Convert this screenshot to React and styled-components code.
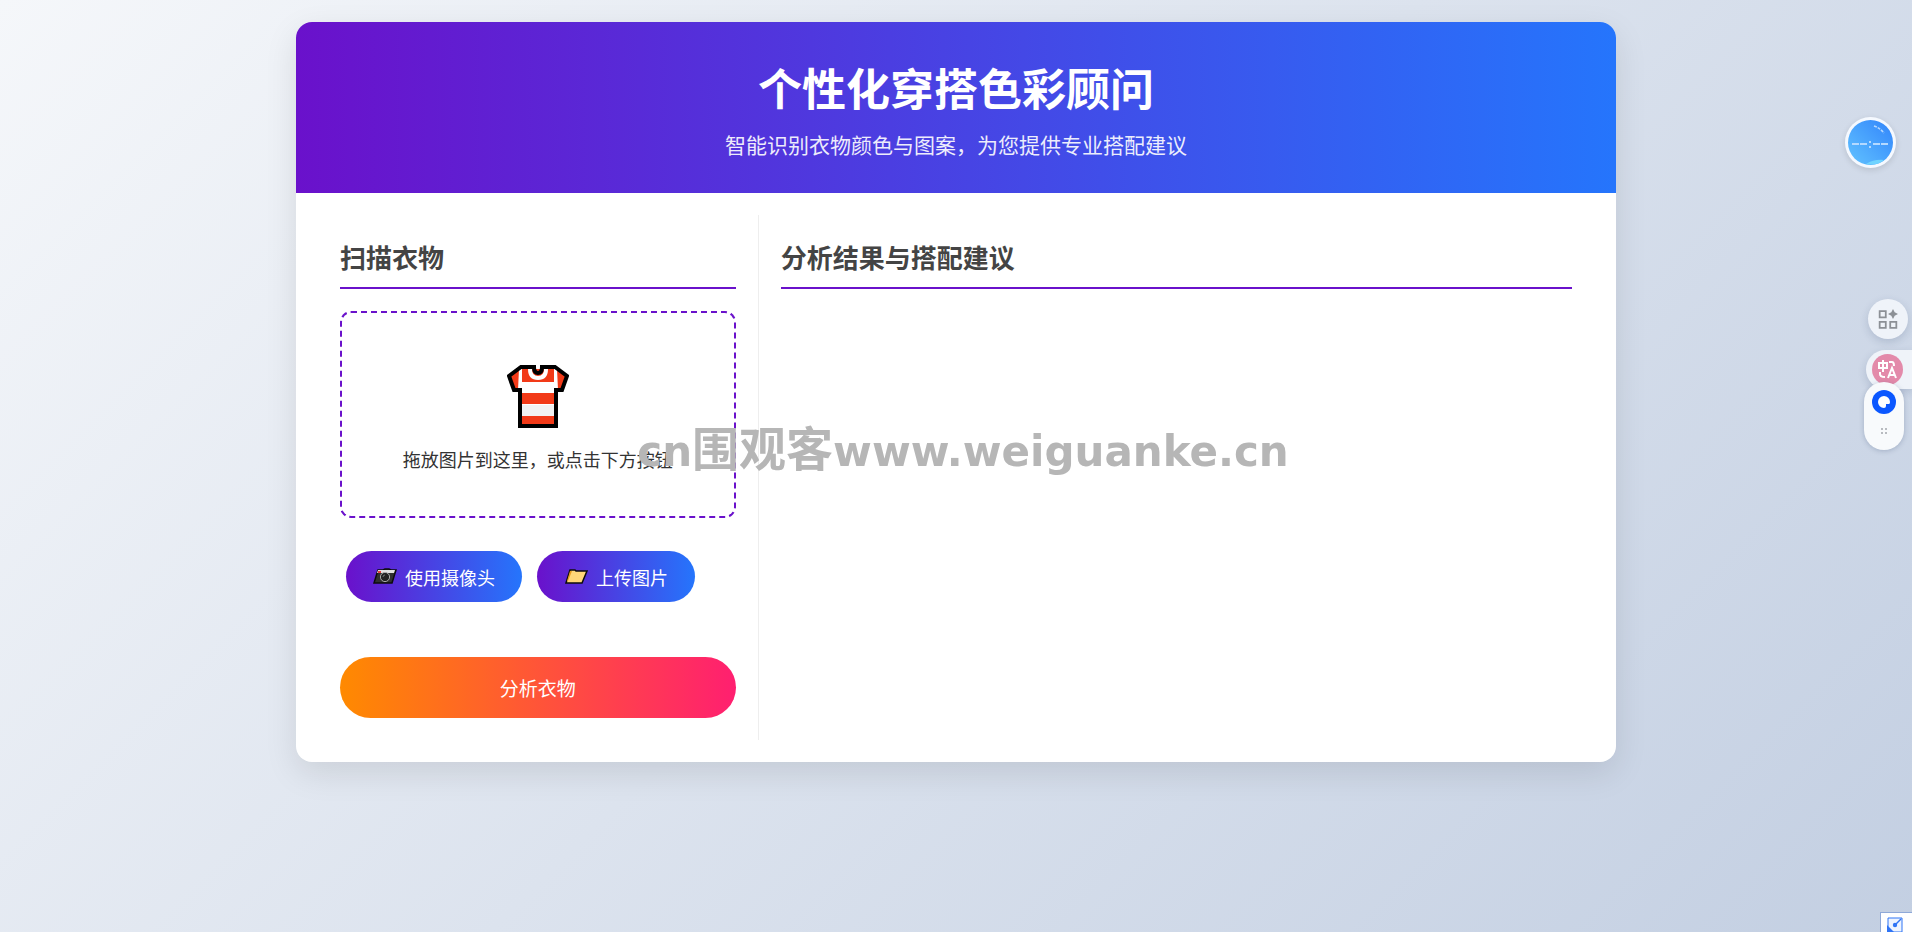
import React, { useState } from "react";
import styled, { createGlobalStyle, css } from "styled-components";

const GlobalStyle = createGlobalStyle`
  * {
    box-sizing: border-box;
    margin: 0;
    padding: 0;
  }
  body {
    min-height: 100vh;
    padding: 22px;
    color: #333;
    font-family: "Noto Sans CJK SC", sans-serif;
    font-size: 18px;
    line-height: 26px;
    background: linear-gradient(135deg, #f5f7fa 0%, #c3cfe2 100%) no-repeat fixed;
  }
  button {
    border: none;
    cursor: pointer;
    font-family: inherit;
  }
`;

const Container = styled.div`
  max-width: 1320px;
  margin: 0 auto;
  background: #fff;
  border-radius: 16px;
  box-shadow: 0 11px 33px rgba(0, 0, 0, 0.1);
  overflow: hidden;
`;
const Header = styled.header`
  padding: 33px;
  color: #fff;
  text-align: center;
  background: linear-gradient(90deg, #6a11cb 0%, #2575fc 100%);
`;
const Title = styled.h1`
  margin-bottom: 9px;
  font-size: 44px;
  line-height: 64px;
`;
const Subtitle = styled.p`
  font-size: 21px;
  line-height: 32px;
  opacity: 0.9;
`;
const Content = styled.main`
  display: flex;
  padding: 22px;
`;
const Section = styled.section`
  flex: ${({ $grow }) => $grow};
  padding: 22px;
  ${({ $divided }) =>
    $divided &&
    css`
      border-right: 1px solid #eee;
    `}
`;
const SectionTitle = styled.h2`
  margin-bottom: 22px;
  padding-bottom: 11px;
  border-bottom: 2px solid #6a11cb;
  color: #444;
  font-size: 26px;
  line-height: 39px;
`;
const DropArea = styled.div`
  display: flex;
  flex-direction: column;
  align-items: center;
  margin-bottom: 22px;
  padding: 44px 22px;
  border: 2px dashed #6a11cb;
  border-radius: 11px;
  svg {
    margin: 8px 0 17px;
  }
`;
const ButtonRow = styled.div`
  display: flex;
  gap: 15px;
  padding: 11px 6px;
`;
const PillButton = styled.button`
  display: flex;
  align-items: center;
  gap: 8px;
  height: 51px;
  padding: 0 27px;
  border-radius: 55px;
  color: #fff;
  font-size: 18px;
  background: linear-gradient(90deg, #6a11cb 0%, #2575fc 100%);
`;
const AnalyzeButton = styled.button`
  display: block;
  width: 100%;
  height: 61px;
  margin-top: 44px;
  border-radius: 55px;
  color: #fff;
  font-size: 19px;
  background: linear-gradient(90deg, #ff8a00 0%, #ff1f70 100%);
`;
const Watermark = styled.div`
  position: fixed;
  top: 416px;
  left: 0;
  width: 100%;
  padding-left: 14px;
  color: #b6b6b6;
  font-family: "DejaVu Sans", sans-serif;
  font-size: 42px;
  font-weight: 700;
  line-height: 60px;
  text-align: center;
  white-space: nowrap;
  pointer-events: none;
`;
const WatermarkName = styled.span`
  font-family: "Noto Sans CJK SC", sans-serif;
  font-size: 47px;
`;
const FloatButton = styled.button`
  position: fixed;
  display: flex;
  align-items: center;
  justify-content: center;
`;
const AssistantButton = styled(FloatButton)`
  top: 117px;
  right: 16px;
  width: 51px;
  height: 51px;
  border-radius: 50%;
  background: #f5f9ff;
  box-shadow: 0 2px 6px rgba(0, 0, 0, 0.12);
`;
const AppsButton = styled(FloatButton)`
  top: 299px;
  right: 4px;
  width: 40px;
  height: 40px;
  border-radius: 50%;
  background: #eff3f9;
  box-shadow: 0 3px 8px rgba(40, 60, 100, 0.18);
`;
const TranslateButton = styled(FloatButton)`
  top: 350px;
  right: 0;
  width: 46px;
  height: 39px;
  padding-right: 4px;
  border-radius: 20px 0 0 20px;
  background: #eff3f9;
  box-shadow: 0 3px 8px rgba(40, 60, 100, 0.18);
`;
const ChatDock = styled(FloatButton)`
  top: 382px;
  right: 8px;
  flex-direction: column;
  justify-content: flex-start;
  gap: 13px;
  width: 40px;
  height: 68px;
  padding-top: 8px;
  border-radius: 20px;
  background: #f8fafc;
  box-shadow: 0 1px 5px rgba(40, 60, 100, 0.25);
`;
const CornerButton = styled(FloatButton)`
  right: 0;
  bottom: 0;
  width: 32px;
  height: 20px;
  padding: 4px 3px 0 0;
  align-items: flex-start;
  border-top: 1px solid #8fa9d8;
  border-left: 1px solid #8fa9d8;
  background: #fff;
  overflow: hidden;
`;

function ShirtIcon() {
  return (
    <svg width="62" height="64" viewBox="0 0 62 64" aria-hidden="true">
      <path d="M14 2H28V7H34V2H48L60 11L54 25H49V61H13V25H7L2 11Z" fill="#fff" />
      <path d="M12 4L2 11L7 25H11ZM50 4L60 11L55 25H51Z" fill="#f23a18" />
      <path d="M15 4H47V17H15ZM15 28H47V39H15ZM15 51H47V60H15Z" fill="#f23a18" />
      <path d="M15 40H47V51H15Z" fill="#f2f2f2" />
      <path d="M23 4Q23 13 31 13Q39 13 39 4" fill="none" stroke="#fff" strokeWidth="4" />
      <path
        d="M27 2H14L2 11L7 25H13V61H49V25H55L60 11L48 2H35Q35 8 31 8Q27 8 27 2Z"
        fill="none"
        stroke="#000"
        strokeWidth="4"
      />
    </svg>
  );
}

function CameraIcon() {
  return (
    <svg width="24" height="17" viewBox="0 0 24 17" aria-hidden="true">
      <path d="M5 2H10L12 1H16L18 2H23L19 15H1Z" fill="#303030" stroke="#0c0c0c" strokeWidth="1.5" />
      <path d="M5 2H22L21 5H4Z" fill="#e2e2e2" />
      <path d="M5 3H8V5H5Z" fill="#e8413c" />
      <circle cx="12" cy="9" r="4.6" fill="#222" stroke="#aaa" />
      <path d="M10 9Q10 7 12 7" fill="none" stroke="#777" />
    </svg>
  );
}

function FolderIcon() {
  return (
    <svg width="24" height="17" viewBox="0 0 24 17" aria-hidden="true">
      <path d="M6 2H11L12 3H23L18 15H2Z" fill="#ffd679" stroke="#0c0c0c" strokeWidth="1.5" />
      <path d="M6 3H8L4 13H3Z" fill="#e89c20" />
    </svg>
  );
}

function AssistantIcon() {
  return (
    <svg width="45" height="45" viewBox="0 0 45 45" aria-hidden="true">
      <defs>
        <linearGradient id="assistant" x1="0" y1="1" x2="1" y2="0">
          <stop offset="0" stopColor="#62c3ff" />
          <stop offset="1" stopColor="#3184fb" />
        </linearGradient>
      </defs>
      <circle cx="22.5" cy="22.5" r="22.5" fill="url(#assistant)" />
      <path d="M4 24H11M12 24H19M25 24H32M33 24H40" stroke="#b4d9ff" strokeWidth="2" />
      <path d="M21 22H23M21 27H23" stroke="#b4d9ff" strokeWidth="2" />
      <path d="M26 6Q32 8 36 13" fill="none" stroke="#b5d8ff" strokeWidth="1.5" strokeDasharray="3 1" />
      <path d="M18 44Q26 39 36 40Q29 46 18 44Z" fill="#70d4ff" />
    </svg>
  );
}

function AppsIcon() {
  return (
    <svg width="20" height="20" viewBox="0 0 18 18" aria-hidden="true">
      <path
        d="M1.5 2H7V7.5H1.5ZM1.5 11.5H7V17H1.5ZM11 11.5H16.5V17H11Z"
        fill="none"
        stroke="#8c9096"
        strokeWidth="1.6"
      />
      <path d="M13.5 0L15 3L18 4.5L15 6L13.5 9L12 6L9 4.5L12 3Z" fill="#8c9096" />
    </svg>
  );
}

function TranslateIcon() {
  return (
    <svg width="31" height="31" viewBox="0 0 31 31" aria-hidden="true">
      <circle cx="15.5" cy="15.5" r="15.5" fill="#e38aaa" />
      <g fill="none" stroke="#fff" strokeWidth="2">
        <path d="M7 9H15V14H7ZM11 6V18" />
        <path d="M17 8H20Q22 8 22 12M8 18V20Q8 23 13 23" />
        <path d="M16 24L20 14L24 24M17 21H23" />
      </g>
    </svg>
  );
}

function ChatIcon() {
  return (
    <svg width="24" height="24" viewBox="0 0 24 24" aria-hidden="true">
      <circle cx="12" cy="12" r="12" fill="#0b57ff" />
      <path d="M12 6A6 6 0 1 0 12 18Q14 18 14 16V14H17Q18 14 18 12A6 6 0 0 0 12 6Z" fill="#fff" />
    </svg>
  );
}

function GripIcon() {
  return (
    <svg width="8" height="8" viewBox="0 0 8 8" aria-hidden="true">
      <path d="M1 1H3V3H1ZM5 1H7V3H5ZM1 5H3V7H1ZM5 5H7V7H5Z" fill="#b8bbc0" />
    </svg>
  );
}

function CornerIcon() {
  return (
    <svg width="16" height="16" viewBox="0 0 16 16" aria-hidden="true">
      <path d="M1 1H15V15H1Z" fill="#eef4ff" stroke="#2f74f5" />
      <path d="M0 8L8 16H0Z" fill="#2f74f5" />
      <path d="M8 8L14 2" stroke="#2f74f5" strokeWidth="1.5" />
      <circle cx="8" cy="8" r="2.2" fill="#2f74f5" />
    </svg>
  );
}

export default function App() {
  const [dragging, setDragging] = useState(false);

  return (
    <>
      <GlobalStyle />
      <Container>
        <Header>
          <Title>个性化穿搭色彩顾问</Title>
          <Subtitle>智能识别衣物颜色与图案，为您提供专业搭配建议</Subtitle>
        </Header>
        <Content>
          <Section $grow={1} $divided>
            <SectionTitle>扫描衣物</SectionTitle>
            <DropArea
              data-dragging={dragging}
              onDragEnter={() => setDragging(true)}
              onDragLeave={() => setDragging(false)}
            >
              <ShirtIcon />
              <p>拖放图片到这里，或点击下方按钮</p>
            </DropArea>
            <ButtonRow>
              <PillButton type="button">
                <CameraIcon />
                使用摄像头
              </PillButton>
              <PillButton type="button">
                <FolderIcon />
                上传图片
              </PillButton>
            </ButtonRow>
            <AnalyzeButton type="button">分析衣物</AnalyzeButton>
          </Section>
          <Section $grow={2}>
            <SectionTitle>分析结果与搭配建议</SectionTitle>
          </Section>
        </Content>
      </Container>
      <Watermark>
        cn<WatermarkName>围观客</WatermarkName>www.weiguanke.cn
      </Watermark>
      <AssistantButton type="button" aria-label="助手">
        <AssistantIcon />
      </AssistantButton>
      <AppsButton type="button" aria-label="应用">
        <AppsIcon />
      </AppsButton>
      <TranslateButton type="button" aria-label="翻译">
        <TranslateIcon />
      </TranslateButton>
      <ChatDock type="button" aria-label="对话">
        <ChatIcon />
        <GripIcon />
      </ChatDock>
      <CornerButton type="button" aria-label="展开">
        <CornerIcon />
      </CornerButton>
    </>
  );
}
